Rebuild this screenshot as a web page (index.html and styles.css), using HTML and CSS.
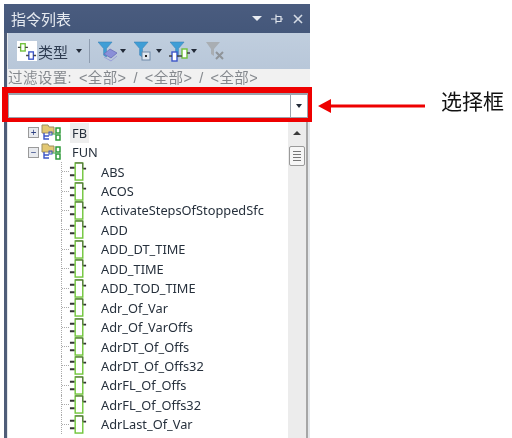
FILE: index.html
```html
<!DOCTYPE html>
<html lang="zh-CN">
<head>
    <meta charset="UTF-8">
    <title>指令列表</title>
    <link rel="stylesheet" href="styles.css">
</head>
<body>

<svg width="0" height="0" class="defs">
    <symbol id="fn" viewBox="0 0 20 20">
        <path d="M1 6h5M1 14h5M14 7h4" stroke="#333" stroke-width="2" fill="none"/>
        <rect x="6.500" y="1" width="8" height="18" fill="#fff" stroke="#72c63c" stroke-width="1.500"/>
        <path d="M6.500 1h8v6" stroke="#4f5f40" stroke-width="1" fill="none"/>
    </symbol>
    <symbol id="folder" viewBox="0 0 22 18">
        <path d="M1 1h6l1 2h5v6H1z" fill="#e3c873" stroke="#9c8f63"/>
        <path d="M3 9v6h5M3 12h5" stroke="#3c55c8" stroke-width="1.400" fill="none"/>
        <rect x="8" y="8" width="3" height="3" fill="none" stroke="#3c55c8"/>
        <rect x="15" y="4" width="4" height="5" fill="#fff" stroke="#2f9a3a" stroke-width="1.500"/>
        <rect x="15" y="11" width="4" height="5" fill="#fff" stroke="#2f9a3a" stroke-width="1.500"/>
        <path d="M11 10h4" stroke="#2f9a3a"/>
    </symbol>
    <symbol id="funnel" viewBox="0 0 16 18">
        <path d="M0 1h15L9 8v9L6 15V8z" fill="#3f9ed6" stroke="#3b82b8" stroke-width=".6"/>
    </symbol>
</svg>

<div class="panel">
    <div class="title-bar">
        <span class="title">指令列表</span>
        <span class="title-btns">
            <i class="caret caret-light"></i>
            <svg width="13" height="10" viewBox="0 0 13 10"><path d="M0 5h5M5 2.500h5v5h-5zM5 .5v9M10 5h2" stroke="#dfe4ec" stroke-width="1.200" fill="none"/></svg>
            <svg width="10" height="10" viewBox="0 0 10 10"><path d="M1 1l8 8M9 1l-8 8" stroke="#d5dbe5" stroke-width="1.600"/></svg>
        </span>
    </div>

    <div class="toolbar">
        <span class="type-icon">
            <svg width="20" height="20" viewBox="0 0 22 22">
                <rect x="4" y="3" width="5" height="8" fill="#fff" stroke="#6fc13a" stroke-width="1.500"/>
                <path d="M1 7h3M9 7h3" stroke="#444" stroke-width="1.500"/>
                <rect x="13" y="12" width="5" height="8" fill="#fff" stroke="#3c55c8" stroke-width="1.500"/>
                <path d="M10 16h3M18 16h3" stroke="#444" stroke-width="1.500"/>
            </svg>
        </span>
        <span class="type-label">类型</span>
        <i class="caret caret-type"></i>
        <span class="sep"></span>
        <span class="tool">
            <svg width="22" height="22" viewBox="0 0 22 22">
                <use href="#funnel" width="15" height="17" x="0" y="1"/>
                <path d="M6 14l6-5 7 4-6 5z" fill="#8a8fd8" stroke="#6a6fb8" stroke-width=".8"/>
                <path d="M6 17l7 4 6-5" stroke="#9a9fd8" fill="none"/>
            </svg>
            <i class="caret"></i>
        </span>
        <span class="tool">
            <svg width="22" height="22" viewBox="0 0 22 22">
                <use href="#funnel" width="15" height="17" x="0" y="1"/>
                <rect x="8" y="12" width="8" height="8" fill="#dfe6ee" stroke="#6f89a8"/>
                <rect x="11" y="15" width="2" height="2" fill="#222"/>
            </svg>
            <i class="caret"></i>
        </span>
        <span class="tool">
            <svg width="22" height="22" viewBox="0 0 22 22">
                <use href="#funnel" width="15" height="17" x="1" y="1"/>
                <rect x="3" y="12" width="5" height="9" fill="#fff" stroke="#3c55c8" stroke-width="1.400"/>
                <rect x="13" y="9" width="5" height="9" fill="#fff" stroke="#6fc13a" stroke-width="1.400"/>
                <path d="M0 16h3M8 16h5M18 13h3" stroke="#444" stroke-width="1.400"/>
            </svg>
            <i class="caret"></i>
        </span>
        <span class="tool">
            <svg width="22" height="22" viewBox="0 0 22 22">
                <path d="M1 2h14L9 9v7L6 14V9z" fill="#a9aeb3"/>
                <path d="M11 12l7 7M18 12l-7 7" stroke="#8f9499" stroke-width="2"/>
            </svg>
        </span>
    </div>

    <div class="filter">过滤设置: &lt;全部&gt; / &lt;全部&gt; / &lt;全部&gt;</div>

    <div class="combo-frame">
        <div class="combo">
            <span class="combo-input"></span>
            <span class="combo-btn"><i class="caret"></i></span>
        </div>
    </div>

    <div class="tree-wrap">
        <ul class="tree" id="tree"></ul>
        <div class="scrollbar">
            <i class="scroll-up"></i>
            <span class="thumb"><b></b><b></b><b></b><b></b></span>
        </div>
    </div>
</div>

<div class="note">
    <svg class="note-arrow" width="107" height="14" viewBox="0 0 107 14"><path d="M0 7L13 0v5.500h94v3H13V14z" fill="#ee0000"/></svg>
    <span class="note-text">选择框</span>
</div>

<script>
    var names = ["ABS", "ACOS", "ActivateStepsOfStoppedSfc", "ADD", "ADD_DT_TIME", "ADD_TIME", "ADD_TOD_TIME",
        "Adr_Of_Var", "Adr_Of_VarOffs", "AdrDT_Of_Offs", "AdrDT_Of_Offs32", "AdrFL_Of_Offs", "AdrFL_Of_Offs32", "AdrLast_Of_Var"];

    function folderRow(name, sign, extra) {
        return '<li class="row folder-row"><span class="expander">' + sign + '</span>' +
            '<svg class="folder" width="22" height="18"><use href="#folder"/></svg>' +
            '<span class="label ' + extra + '">' + name + '</span></li>';
    }

    var html = folderRow("FB", "+", "label-selected") + folderRow("FUN", "−", "");
    names.forEach(function (name) {
        html += '<li class="row fn-row"><span class="link"></span><svg class="fn" width="19" height="19"><use href="#fn"/></svg>' +
            '<span class="label">' + name + '</span></li>';
    });
    document.getElementById("tree").innerHTML = html;
</script>

</body>
</html>
```

FILE: styles.css
```css
html, body {
    margin: 0;
    padding: 0;
    height: 100%;
    overflow: hidden;
    background-color: #ffffff;
    font-family: "Liberation Sans", "Noto Sans CJK SC", sans-serif;
}

.defs {
    display: block;
    height: 0;
}

.panel {
    width: 306px;
    height: 434px;
    margin: 4px 0 0 4px;
    display: flex;
    flex-direction: column;
    box-sizing: border-box;
    background: linear-gradient(90deg, #4f5d78 3px, #e4e7ea 3px);
    filter: blur(0.45px);
}

.title-bar {
    height: 29px;
    flex: none;
    display: flex;
    align-items: center;
    justify-content: space-between;
    padding: 0 7px;
    background: linear-gradient(#4a5c7f, #44577a);
}

.title {
    color: #e6eaf0;
    font-size: 15px;
}

.title-btns {
    display: flex;
    align-items: center;
    gap: 9px;
}

.caret {
    display: inline-block;
    width: 0;
    height: 0;
    border-left: 3.5px solid transparent;
    border-right: 3.5px solid transparent;
    border-top: 4px solid #222a38;
}

.caret-light {
    border-left-width: 5px;
    border-right-width: 5px;
    border-top: 5px solid #e8ecf2;
}

.toolbar {
    height: 36px;
    flex: none;
    display: flex;
    align-items: center;
    margin-left: 4px;
    padding-left: 9px;
    background: linear-gradient(#c0cede, #b8c7d9);
    box-sizing: border-box;
}

.type-icon {
    width: 20px;
    height: 20px;
    flex: none;
    background-color: #ffffff;
}

.type-label {
    font-size: 15px;
    color: #2f3d52;
    margin-left: 1px;
}

.caret-type {
    margin-left: 8px;
}

.sep {
    width: 1px;
    height: 24px;
    margin: 0 8px 0 7px;
    background-color: #8f9db0;
}

.tool {
    display: flex;
    align-items: center;
    width: 35.500px;
    flex: none;
}

.filter {
    height: 18px;
    flex: none;
    margin-left: 4px;
    font-size: 14.500px;
    line-height: 18px;
    letter-spacing: 0.4px;
    word-spacing: 2.500px;
    color: #85898e;
    background-color: #f1f1f1;
    white-space: nowrap;
}

.combo-frame {
    height: 35px;
    flex: none;
    margin: 0 -2px;
    box-sizing: border-box;
    border-style: solid;
    border-color: #ee0000;
    border-width: 6px 4px 4px 6px;
    position: relative;
}

.combo {
    height: 100%;
    display: flex;
    box-sizing: border-box;
    border: 1px solid #9aa3ad;
    border-top-width: 2px;
    background-color: #ffffff;
}

.combo-input {
    flex: 1;
}

.combo-btn {
    width: 16px;
    display: flex;
    align-items: center;
    justify-content: center;
    border-left: 1px solid #9aa3ad;
}

.tree-wrap {
    flex: 1;
    min-height: 0;
    display: flex;
    margin: 0 2px 0 4px;
    background-color: #ffffff;
}

.tree {
    flex: 1;
    list-style: none;
    margin: 0;
    padding: 1px 0 0 0;
    overflow: hidden;
}

.row {
    height: 19.450px;
    display: flex;
    align-items: center;
    font-family: "Noto Sans", sans-serif;
    font-size: 12.800px;
    color: #26303c;
    white-space: nowrap;
}

.folder-row {
    padding-left: 20px;
}

.expander {
    width: 9px;
    height: 9px;
    flex: none;
    border: 1px solid #9a9a9a;
    background-color: #e8eaee;
    color: #2c3f80;
    font-size: 10px;
    line-height: 9px;
    text-align: center;
}

.folder {
    margin-left: 2px;
    margin-right: 7px;
    flex: none;
}

.fn-row {
    padding-left: 53px;
}

.link {
    align-self: stretch;
    flex: none;
    width: 7px;
    border-left: 1px dotted #aaaaaa;
    background: repeating-linear-gradient(90deg, #aaaaaa 0 1px, transparent 1px 2px) left center / 100% 1px no-repeat;
}

.fn {
    flex: none;
    margin-right: 11px;
}

.label {
    padding: 1px 2px;
}

.label-selected {
    background-color: #eeeeee;
}

.scrollbar {
    width: 20px;
    flex: none;
    display: flex;
    flex-direction: column;
    align-items: center;
    background-color: #ececec;
    border-right: 2px solid #a6a6a6;
    box-sizing: border-box;
}

.scroll-up {
    width: 0;
    height: 0;
    margin-top: 9px;
    border-left: 4px solid transparent;
    border-right: 4px solid transparent;
    border-bottom: 4px solid #3a3a3a;
}

.thumb {
    width: 16px;
    height: 20px;
    margin-top: 11px;
    box-sizing: border-box;
    display: flex;
    flex-direction: column;
    align-items: center;
    justify-content: center;
    gap: 2px;
    border: 1px solid #9a9a9a;
    border-radius: 2px;
    background-color: #f6f6f6;
}

.thumb b {
    display: block;
    width: 8px;
    height: 1px;
    background-color: #777777;
}

.note {
    position: absolute;
    left: 318px;
    top: 85px;
    display: flex;
    align-items: flex-start;
    gap: 16px;
    filter: blur(0.3px);
}

.note-arrow {
    margin-top: 14px;
}

.note-text {
    font-size: 21px;
    color: #111111;
    white-space: nowrap;
}
```
